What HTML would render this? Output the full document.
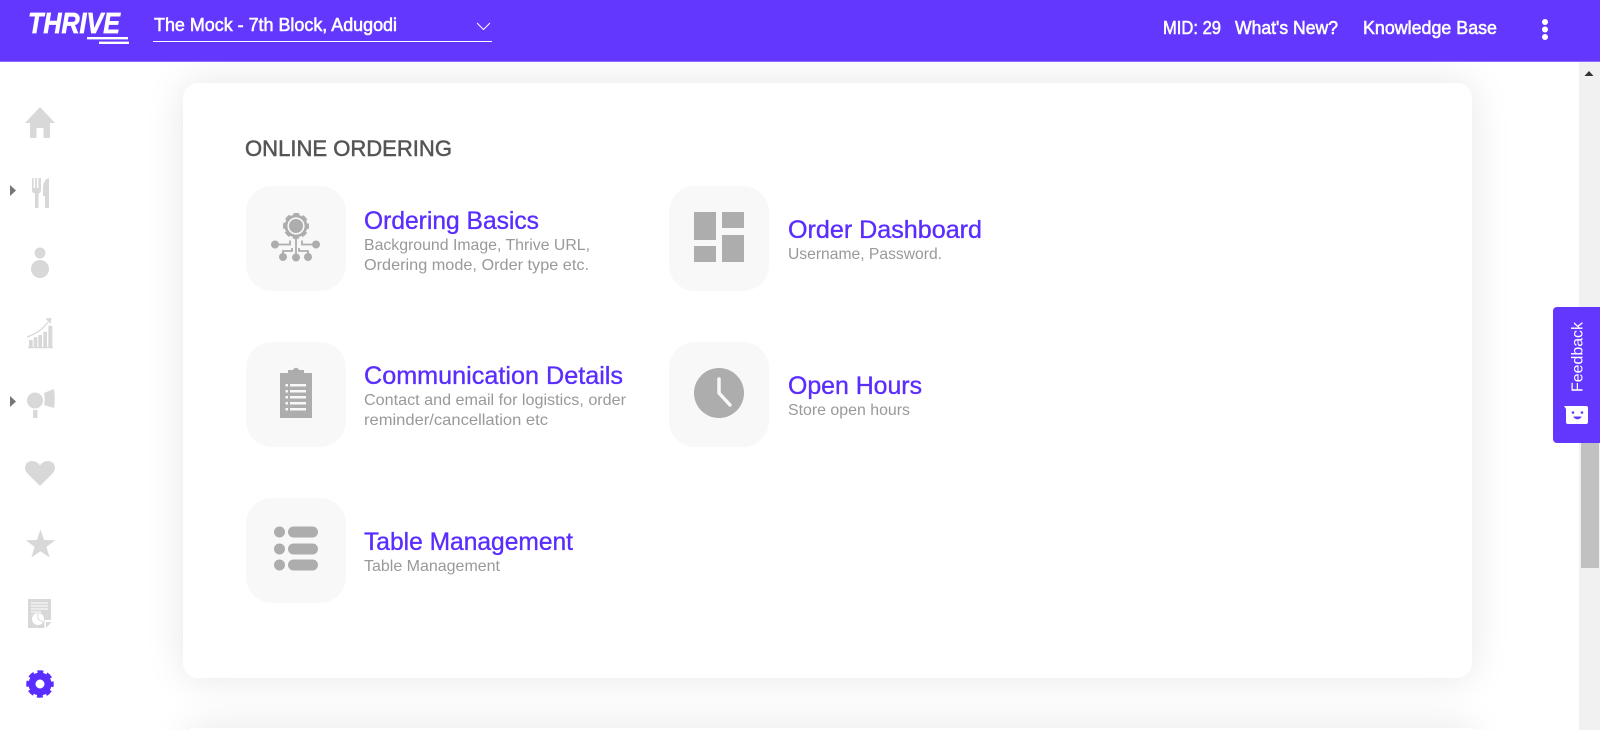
<!DOCTYPE html>
<html lang="en">
<head>
<meta charset="utf-8">
<title>Online Ordering</title>
<style>
html,body{margin:0;padding:0;width:1600px;height:730px;overflow:hidden;background:#fff;font-family:"Liberation Sans",sans-serif}
#page{position:relative;width:1600px;height:730px;overflow:hidden;background:#fff}
.abs{position:absolute}
#hdr{left:0;top:0;width:1600px;height:62px;background:#6437ff;border-bottom:1px solid #8a6aff;box-sizing:border-box}
#sb{left:1579px;top:62px;width:21px;height:668px;background:#f1f1f1}
#thumb{left:1581px;top:400px;width:18px;height:168px;background:#c1c1c1}
.card{background:#fff;border-radius:15px;box-shadow:0 0 40px rgba(0,0,0,.1)}
#c1{left:183px;top:83px;width:1289px;height:595px}
#c2s{left:219px;top:728px;width:1224px;height:2px;box-shadow:0 29px 40px 29px rgba(0,0,0,.1)}
#c2{left:190px;top:728px;width:1282px;height:2px;background:#fff;border-radius:2px 2px 0 0}
.tile{width:100px;height:105px;background:#f8f8f8;border-radius:26px}
#fb{left:1553px;top:307px;width:47px;height:136px;background:#6437ff;border-radius:4px 0 0 4px}
svg{position:absolute;left:0;top:0}
.h{font-family:"Liberation Sans",sans-serif;font-size:18px;font-weight:400;fill:#fff;stroke:#fff;stroke-width:.55}
.t{font-family:"Liberation Sans",sans-serif;font-size:25px;fill:#5a2dff;stroke:#5a2dff;stroke-width:.35}
.d{font-family:"Liberation Sans",sans-serif;font-size:16px;fill:#999}
.s{fill:#d8d8d8}
.i{fill:#adadad}
</style>
</head>
<body>
<div id="page">
<div id="sb" class="abs"></div>
<div id="thumb" class="abs"></div>
<div id="c2s" class="abs"></div>
<div id="c2" class="abs"></div>
<div id="c1" class="abs card"></div>
<div class="abs tile" style="left:246px;top:186px"></div>
<div class="abs tile" style="left:669px;top:186px"></div>
<div class="abs tile" style="left:246px;top:342px"></div>
<div class="abs tile" style="left:669px;top:342px"></div>
<div class="abs tile" style="left:246px;top:498px"></div>
<div id="hdr" class="abs"></div>
<div id="fb" class="abs"></div>

<svg width="1600" height="730" viewBox="0 0 1600 730" xmlns="http://www.w3.org/2000/svg">
  <!-- header -->
  <text x="28" y="33" font-size="29" font-weight="700" font-style="italic" fill="#fff" stroke="#fff" stroke-width=".7" textLength="92" lengthAdjust="spacingAndGlyphs">THRIVE</text>
  <rect x="87" y="37" width="41" height="2.4" fill="#fff"/>
  <rect x="99" y="41.6" width="30" height="2.4" fill="#fff"/>
  <text class="h" x="154" y="31" textLength="243" lengthAdjust="spacingAndGlyphs">The Mock - 7th Block, Adugodi</text>
  <rect x="153" y="41" width="339" height="1" fill="#fff"/>
  <path d="M477 23l6.500 6.500L490 23" fill="none" stroke="#fff" stroke-width="1"/>
  <text class="h" x="1163" y="34" textLength="58" lengthAdjust="spacingAndGlyphs">MID: 29</text>
  <text class="h" x="1235" y="34" textLength="103" lengthAdjust="spacingAndGlyphs">What's New?</text>
  <text class="h" x="1363" y="34" textLength="134" lengthAdjust="spacingAndGlyphs">Knowledge Base</text>
  <circle cx="1545" cy="22" r="3" fill="#fff"/><circle cx="1545" cy="29.500" r="3" fill="#fff"/><circle cx="1545" cy="37" r="3" fill="#fff"/>
  <path d="M1584.500 76h9l-4.500-5z" fill="#333"/>

  <!-- sidebar -->
  <path class="s" d="M40 107L25 123h5v15h6.500v-10h7v10H50v-15h5z"/>
  <path d="M10 185l6 5.500-6 5.500z" fill="#777"/>
  <path class="s" d="M32 178h1.600v10h1.500v-10h1.800v10h1.500v-10H41v12c0 2-1 3-2.500 3.500V208h-3.500v-14.500c-2-.5-3-1.500-3-3.500z"/>
  <path class="s" d="M49 178v30h-4v-12h-2v-8c0-5 2-9 6-10z"/>
  <circle class="s" cx="40" cy="253" r="5.500"/><circle class="s" cx="40" cy="269" r="9"/>
  <path class="s" d="M29 340h3.700v7H29zM33.700 337.300h3.700V347h-3.700zM38.300 335H42v12h-3.700zM43.300 331.700H47V347h-3.700zM48.300 325.700h4V347h-4zM28 347h25v1.300H28z"/>
  <path d="M27 337c9-3 16-8 21-15" fill="none" stroke="#d8d8d8" stroke-width="1.200"/>
  <path class="s" d="M45.500 318.500l6-.5-1 6z"/>
  <path d="M10 396l6 5.500-6 5.500z" fill="#777"/>
  <circle class="s" cx="35" cy="400.500" r="8"/>
  <path class="s" d="M44 393l10-4c1 6 1 13 0 19l-10-3c1-4 1-8 0-12z"/>
  <rect class="s" x="33" y="410" width="4.500" height="8"/>
  <path class="s" d="M40 486L28 474c-6-6-2-13 4-13 3.500 0 6.500 2 8 4.500 1.500-2.500 4.500-4.500 8-4.500 6 0 10 7 4 13z"/>
  <polygon class="s" points="40.500,529.500 44.100,540 55.200,540.200 46.400,546.900 49.600,557.500 40.500,551.200 31.400,557.500 34.600,546.900 25.800,540.200 36.900,540"/>
  <path class="s" d="M28 599h23v21h-6.500v8H28z"/>
  <path d="M31 603h17M31 606h17M31 609h17M31 612h10" stroke="#fff" stroke-width="1"/>
  <circle cx="38" cy="619" r="6" fill="#fff"/>
  <path d="M38 619v-6M38 619l5 3" stroke="#d8d8d8" stroke-width="1"/>
  <path class="s" d="M46 622h5.500l-5.500 6z"/>
  <!-- active settings gear -->
  <circle cx="40" cy="684" r="12" fill="none" stroke="#5a2dff" stroke-width="3.500" stroke-dasharray="5.800 3.625" stroke-dashoffset="2.900"/>
  <circle cx="40" cy="684" r="8" fill="none" stroke="#5a2dff" stroke-width="7"/>

  <!-- content text -->
  <text x="245" y="156" font-size="22" fill="#555" stroke="#555" stroke-width=".5" textLength="207" lengthAdjust="spacingAndGlyphs">ONLINE ORDERING</text>

  <text class="t" x="364" y="229" textLength="175" lengthAdjust="spacingAndGlyphs">Ordering Basics</text>
  <text class="d" x="364" y="250" textLength="226" lengthAdjust="spacingAndGlyphs">Background Image, Thrive URL,</text>
  <text class="d" x="364" y="270" textLength="225" lengthAdjust="spacingAndGlyphs">Ordering mode, Order type etc.</text>

  <text class="t" x="788" y="238" textLength="194" lengthAdjust="spacingAndGlyphs">Order Dashboard</text>
  <text class="d" x="788" y="259" textLength="154" lengthAdjust="spacingAndGlyphs">Username, Password.</text>

  <text class="t" x="364" y="384" textLength="259" lengthAdjust="spacingAndGlyphs">Communication Details</text>
  <text class="d" x="364" y="405" textLength="262" lengthAdjust="spacingAndGlyphs">Contact and email for logistics, order</text>
  <text class="d" x="364" y="425" textLength="184" lengthAdjust="spacingAndGlyphs">reminder/cancellation etc</text>

  <text class="t" x="788" y="394" textLength="134" lengthAdjust="spacingAndGlyphs">Open Hours</text>
  <text class="d" x="788" y="415" textLength="122" lengthAdjust="spacingAndGlyphs">Store open hours</text>

  <text class="t" x="364" y="550" textLength="209" lengthAdjust="spacingAndGlyphs">Table Management</text>
  <text class="d" x="364" y="571" textLength="136" lengthAdjust="spacingAndGlyphs">Table Management</text>

  <!-- ordering basics icon -->
  <circle cx="296" cy="226" r="11.500" fill="none" stroke="#adadad" stroke-width="3" stroke-dasharray="5.800 3.230" stroke-dashoffset="2.900"/>
  <circle cx="296" cy="226" r="10" fill="none" stroke="#adadad" stroke-width="2.800"/>
  <circle cx="296" cy="226" r="7" fill="#adadad"/>
  <path d="M296 238v19M275 244.500h15v-4M317 244.500h-15v-4M283 257v-6h9v-3M308 257v-6h-9v-3" fill="none" stroke="#adadad" stroke-width="1.800"/>
  <g class="i"><circle cx="275" cy="244.500" r="4"/><circle cx="316" cy="244.500" r="4"/><circle cx="283" cy="257" r="4"/><circle cx="296" cy="257.500" r="4"/><circle cx="308" cy="257" r="4"/></g>

  <!-- dashboard icon -->
  <g class="i"><rect x="694" y="212" width="22" height="28"/><rect x="722" y="212" width="22" height="16"/><rect x="694" y="246" width="22" height="16"/><rect x="722" y="235" width="22" height="27"/></g>

  <!-- clipboard icon -->
  <path class="i" d="M280 373h8v-3h5c1-3 5-3 6 0h5v3h8v45h-32z"/>
  <g fill="#f8f8f8"><rect x="285.500" y="384" width="2.500" height="2.500"/><rect x="285.500" y="390" width="2.500" height="2.500"/><rect x="285.500" y="396" width="2.500" height="2.500"/><rect x="285.500" y="402" width="2.500" height="2.500"/><rect x="285.500" y="408" width="2.500" height="2.500"/>
  <rect x="290" y="384" width="16" height="2.500"/><rect x="290" y="390" width="16" height="2.500"/><rect x="290" y="396" width="16" height="2.500"/><rect x="290" y="402" width="16" height="2.500"/><rect x="290" y="408" width="16" height="2.500"/></g>

  <!-- clock icon -->
  <circle class="i" cx="719" cy="393" r="25"/>
  <path d="M719 379v14l11 12" fill="none" stroke="#f8f8f8" stroke-width="3.500" stroke-linecap="round" stroke-linejoin="round"/>

  <!-- table list icon -->
  <g class="i"><circle cx="279.500" cy="532" r="5.500"/><circle cx="279.500" cy="549" r="5.500"/><circle cx="279.500" cy="565" r="5.500"/>
  <rect x="288" y="526.500" width="30" height="11" rx="5.500"/><rect x="288" y="543.500" width="30" height="11" rx="5.500"/><rect x="288" y="559.500" width="30" height="11" rx="5.500"/></g>

  <!-- feedback -->
  <text transform="translate(1582.500 392) rotate(-90)" font-size="16" fill="#fff" textLength="70" lengthAdjust="spacingAndGlyphs">Feedback</text>
  <path d="M1564 406h22a2 2 0 0 1 2 2v14a2 2 0 0 1-2 2h-18a2 2 0 0 1-2-2v-13z" fill="#fff"/>
  <circle cx="1573" cy="412.500" r="1.300" fill="#6437ff"/><circle cx="1582" cy="412.500" r="1.300" fill="#6437ff"/>
  <path d="M1574 417c2 2.500 5 2.500 7 0z" fill="#6437ff" stroke="#6437ff" stroke-width="1" stroke-linejoin="round"/>
</svg>
</div>
</body>
</html>
